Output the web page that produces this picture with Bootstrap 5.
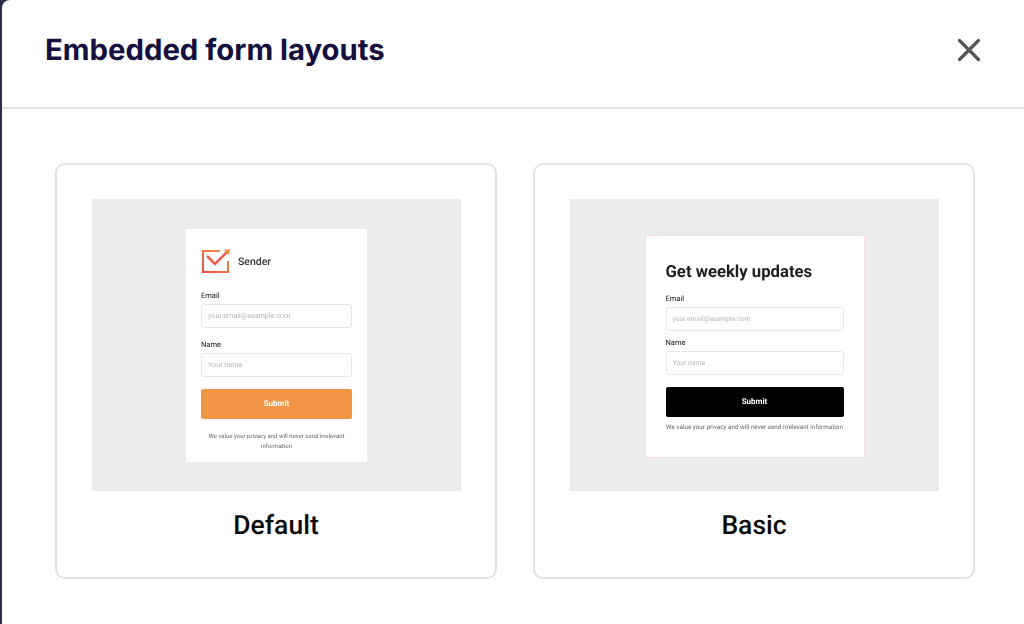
<!DOCTYPE html>
<html lang="en">
<head>
<meta charset="utf-8">
<title>Embedded form layouts</title>
<link rel="stylesheet" href="https://cdn.jsdelivr.net/npm/bootstrap@5.3.0/dist/css/bootstrap.min.css">
<style>
html,body{height:624px;overflow:hidden;background:#2c2a4d}
.shell{height:624px;margin-left:2px;background:#fff;border-top-left-radius:8px;font-family:Roboto,sans-serif;text-rendering:geometricPrecision}
.head{height:109px;padding:0 43px 5px 43px;border-bottom:2px solid #e1e1e1}
.head h1{font-family:Inter,sans-serif;font-weight:700;font-size:29.300px;color:#14103f;margin:0}
.closer{padding:0;border:0;background:none;line-height:0;margin-bottom:2px}
.content{padding:54px 49px 0 53px;gap:36px}
.pick{width:442px;height:416px;padding:34px 35px 0;border:2px solid #e3e3e3;border-radius:10px}
.stage{width:369px;height:292px;background:#ececec;padding-top:30px}
.pick-name{font-size:26.500px;font-weight:500;color:#0c0c0c;margin-top:18px;line-height:34px}
.mini{background:#fff;color:#333;filter:blur(.55px)}
.mini-a{width:181px;height:233px;padding:17px 15px 0}
.mini-b{width:220px;height:223px;margin-top:6px;padding:20px 20px 0;border:1px solid #f6dfe2;border-radius:2px}
.brand{height:28px;gap:8px;font-size:10.500px;font-weight:500;color:#333;margin-bottom:17px}
.mini-label{font-size:7.500px;line-height:10px;color:#111;margin-bottom:3px}
.fake-input{height:24px;border:1px solid #e8e8e8;border-radius:3px;padding:0 6px;font-size:7.200px;color:#b5b5b5;margin-bottom:12px}
.mini-b .fake-input{margin-bottom:7px;font-size:6.800px}
.fake-btn{height:30px;border-radius:2px;font-size:8px;font-weight:700;color:#fff}
.mini-a .fake-btn{background:#f29544;margin-top:12px}
.mini-b .fake-btn{background:#000;margin-top:12px}
.fine{line-height:9.500px;color:#666;text-align:center}
.mini-a .fine{font-size:6px;margin-top:13px}
.mini-b .fine{font-size:6.300px;margin-top:6px;white-space:nowrap}
.mini-b h2{font-size:16.700px;font-weight:700;color:#1d1d1d;margin:0 0 4px;line-height:34px;white-space:nowrap}
</style>
</head>
<body>
<div class="shell">
  <div class="head d-flex align-items-center justify-content-between">
    <h1>Embedded form layouts</h1>
    <button class="closer" type="button" aria-label="Close">
      <svg width="24" height="24" viewBox="0 0 24 24"><path d="M2.500 2.500 21.500 21.500M21.500 2.500 2.500 21.500" stroke="#555" stroke-width="3.200" fill="none" stroke-linecap="round"/></svg>
    </button>
  </div>
  <div class="content d-flex">
    <div class="pick text-center">
      <div class="stage d-flex justify-content-center align-items-start">
        <div class="mini mini-a text-start">
          <div class="brand d-flex align-items-center">
            <svg width="29" height="25" viewBox="0 0 29 25" fill="none"><defs><linearGradient id="lg" x1="0" y1="1" x2="1" y2="0"><stop offset="0" stop-color="#ee4f4a"/><stop offset="1" stop-color="#f29544"/></linearGradient></defs><path d="M19 3H2V24H27V13" stroke="url(#lg)" stroke-width="2"/><path d="M6 8 14 16 27 3" stroke="#ee5f4a" stroke-width="2.500"/><path d="M23 2 29 1 28 7Z" fill="#f29544"/></svg>
            <span class="pt-1">Sender</span>
          </div>
          <div class="mini-label">Email</div>
          <div class="fake-input d-flex align-items-center">your.email@example.com</div>
          <div class="mini-label">Name</div>
          <div class="fake-input d-flex align-items-center">Your name</div>
          <div class="fake-btn d-flex align-items-center justify-content-center">Submit</div>
          <div class="fine">We value your privacy and will never send irrelevant information</div>
        </div>
      </div>
      <div class="pick-name">Default</div>
    </div>
    <div class="pick text-center">
      <div class="stage d-flex justify-content-center align-items-start">
        <div class="mini mini-b text-start">
          <h2>Get weekly updates</h2>
          <div class="mini-label">Email</div>
          <div class="fake-input d-flex align-items-center">your.email@example.com</div>
          <div class="mini-label">Name</div>
          <div class="fake-input d-flex align-items-center">Your name</div>
          <div class="fake-btn d-flex align-items-center justify-content-center">Submit</div>
          <div class="fine">We value your privacy and will never send irrelevant information</div>
        </div>
      </div>
      <div class="pick-name">Basic</div>
    </div>
  </div>
</div>
<script src="https://cdn.jsdelivr.net/npm/bootstrap@5.3.0/dist/js/bootstrap.bundle.min.js"></script>
</body>
</html>
